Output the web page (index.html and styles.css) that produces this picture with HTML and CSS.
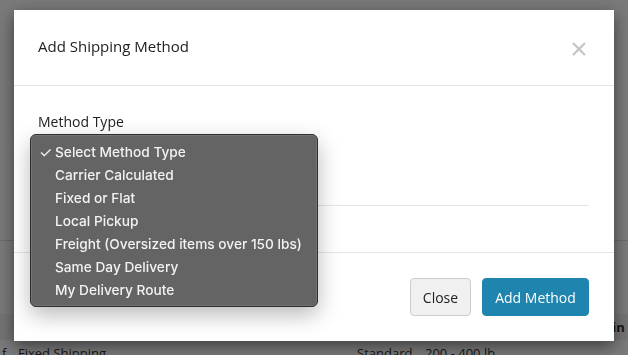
FILE: index.html
```html
<!DOCTYPE html>
<html lang="en">

<head>
    <meta charset="UTF-8">
    <meta name="viewport" content="width=device-width, initial-scale=1.0">
    <title>Shipping Methods</title>
    <link rel="stylesheet" href="styles.css">
</head>

<body>
    <div class="page">
        <div class="page-top"></div>
        <div class="table">
            <div class="thead">
                <span class="col col-name">Name</span>
                <span class="col col-type">Type</span>
                <span class="col col-weight">Weight</span>
                <span class="col col-min">Min Shipping</span>
            </div>
            <div class="trow">
                <span class="col col-icon">f</span>
                <span class="col col-name">Fixed Shipping</span>
                <span class="col col-type">Standard</span>
                <span class="col col-weight">200 - 400 lb</span>
            </div>
        </div>
    </div>

    <div class="backdrop"></div>

    <div class="modal">
        <div class="modal-header">
            <h4 class="modal-title">Add Shipping Method</h4>
            <button class="modal-close" aria-label="Close">
                <svg width="16" height="16" viewBox="0 0 16 16">
                    <path d="M2 2 L14 14 M14 2 L2 14" stroke="#c4c4c4" stroke-width="2.2" fill="none" />
                </svg>
            </button>
        </div>
        <div class="modal-body">
            <label class="field-label">Method Type</label>
            <div class="select"></div>
            <hr class="divider">
        </div>
        <div class="modal-footer">
            <button class="btn btn-default">Close</button>
            <button class="btn btn-primary">Add Method</button>
        </div>

        <ul class="menu">
            <li class="menu-item checked">Select Method Type</li>
            <li class="menu-item">Carrier Calculated</li>
            <li class="menu-item">Fixed or Flat</li>
            <li class="menu-item">Local Pickup</li>
            <li class="menu-item">Freight (Oversized items over 150 lbs)</li>
            <li class="menu-item">Same Day Delivery</li>
            <li class="menu-item">My Delivery Route</li>
        </ul>
    </div>
</body>

</html>
```

FILE: styles.css
```css
* {
    margin: 0;
    padding: 0;
    box-sizing: border-box;
}

body {
    width: 628px;
    height: 355px;
    overflow: hidden;
    background: #fff;
    font-family: 'Open Sans', sans-serif;
    color: #333;
}

/* page behind the dialog */
.page {
    width: 628px;
    height: 355px;
    overflow: hidden;
}

.page-top {
    height: 241px;
    border-bottom: 1px solid #ddd;
}

.table {
    padding-top: 73px;
}

.thead,
.trow {
    display: flex;
    font-size: 13px;
    white-space: nowrap;
}

.thead {
    height: 26px;
    align-items: center;
    background: #f3f3f3;
    font-weight: bold;
}

.trow {
    height: 26px;
    align-items: center;
}

.col {
    flex-shrink: 0;
}

.col-icon {
    width: 18px;
    padding-left: 2px;
}

.thead .col-name {
    margin-left: 18px;
}

.col-name {
    width: 339px;
}

.col-type {
    width: 68px;
}

.col-weight {
    width: 175px;
}

.backdrop {
    position: fixed;
    inset: 0;
    background: rgba(0, 0, 0, 0.52);
}

/* dialog */
.modal {
    position: absolute;
    top: 10px;
    left: 14px;
    width: 600px;
    height: 331px;
    background: #fff;
    box-shadow: 0 5px 15px rgba(0, 0, 0, 0.5);
    display: flex;
    flex-direction: column;
}

.modal-header {
    height: 76px;
    border-bottom: 1px solid #e5e5e5;
    display: flex;
    align-items: center;
    justify-content: space-between;
    padding: 0 27px 4px 24px;
}

.modal-title {
    font-size: 15px;
    font-weight: normal;
    color: #222;
}

.modal-close {
    border: none;
    background: none;
    display: flex;
    margin-top: 6px;
}

.modal-body {
    flex: 1;
    padding: 26px 25px 0 24px;
}

.field-label {
    display: block;
    font-size: 14px;
    line-height: 20px;
    color: #222;
}

.select {
    margin-top: 2px;
    height: 34px;
    width: 270px;
    border: 1px solid #ccc;
    border-radius: 4px;
}

.divider {
    border: none;
    border-top: 1px solid #e5e5e5;
    margin-top: 37px;
}

.modal-footer {
    height: 89px;
    border-top: 1px solid #e5e5e5;
    display: flex;
    justify-content: flex-end;
    align-items: flex-start;
    gap: 11px;
    padding: 25px 25px 0 0;
}

.btn {
    height: 38px;
    font-family: 'Open Sans', sans-serif;
    font-size: 14px;
    border-radius: 4px;
    padding: 0;
    white-space: nowrap;
}

.btn-default {
    width: 61px;
    background: #f0f0f0;
    border: 1px solid #ccc;
    color: #222;
}

.btn-primary {
    width: 107px;
    background: #1f84ae;
    border: 1px solid #1f84ae;
    color: #fff;
}

/* native-looking dropdown of the select */
.menu {
    position: absolute;
    top: 124px;
    left: 16px;
    width: 288px;
    list-style: none;
    background: #646464;
    border: 1px solid #2e2e2e;
    border-radius: 6px;
    box-shadow: inset 0 0 0 1px #747474, 0 8px 22px rgba(0, 0, 0, 0.28);
    padding: 6px 0 4px;
    font-family: 'Inter', 'Liberation Sans', sans-serif;
    font-size: 13.7px;
    font-weight: 500;
    color: #f2f2f2;
}

.menu-item {
    height: 23px;
    line-height: 23px;
    padding-left: 24px;
    position: relative;
    white-space: nowrap;
}

.menu-item.checked::before {
    content: "\2713";
    position: absolute;
    left: 8px;
    font-size: 15px;
    font-weight: normal;
}
```
